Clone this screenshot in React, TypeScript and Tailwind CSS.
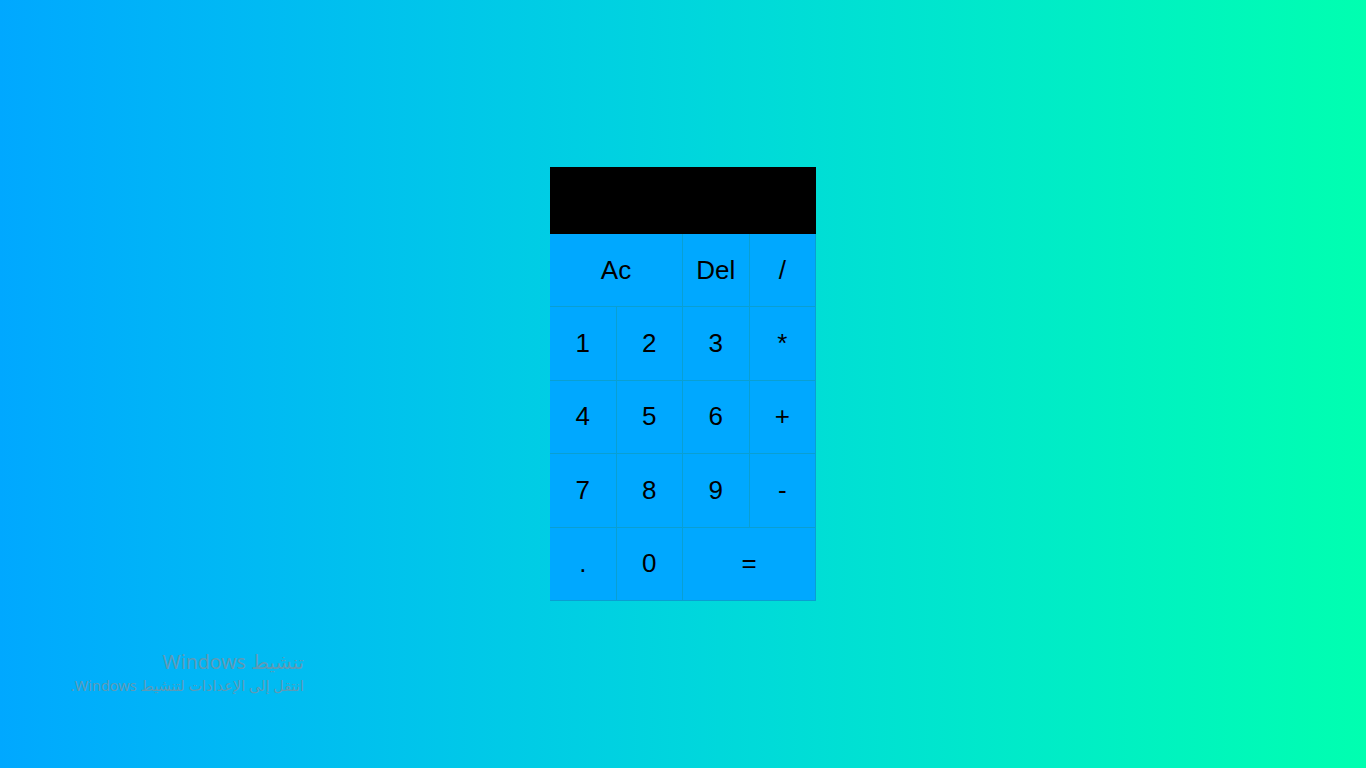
const keys: { label: string; span?: string }[] = [
  { label: 'Ac', span: 'col-span-2' },
  { label: 'Del' },
  { label: '/' },
  { label: '1' },
  { label: '2' },
  { label: '3' },
  { label: '*' },
  { label: '4' },
  { label: '5' },
  { label: '6' },
  { label: '+' },
  { label: '7' },
  { label: '8' },
  { label: '9' },
  { label: '-' },
  { label: '.' },
  { label: '0' },
  { label: '=', span: 'col-span-2' },
];

export default function App() {
  return (
    <div className="relative h-screen w-full bg-gradient-to-r from-[#00a8ff] to-[#00ffb0] flex items-center justify-center font-['Liberation_Sans',Arial,sans-serif]">
      <div className="w-[266px]">
        {/* Display */}
        <div className="h-[67px] bg-black" />

        {/* Keys */}
        <div className="grid grid-cols-4 bg-[#00a8ff]">
          {keys.map((k, i) => (
            <button
              key={i}
              className={`${k.span ?? ''} h-[73.4px] border-r border-b border-[#0a9fd2] bg-[#00a8ff] text-black text-[26px] flex items-center justify-center`}
            >
              {k.label}
            </button>
          ))}
        </div>
      </div>

      {/* Windows activation watermark */}
      <div
        dir="rtl"
        className="absolute left-0 top-[649px] w-[304px] text-right text-[#5f9ab6] font-['Noto_Sans','DejaVu_Sans',sans-serif]"
      >
        <div className="text-[19.5px] leading-[26px]">تنشيط Windows</div>
        <div className="text-[14.5px] leading-[20px]">انتقل إلى الإعدادات لتنشيط Windows.</div>
      </div>
    </div>
  );
}
